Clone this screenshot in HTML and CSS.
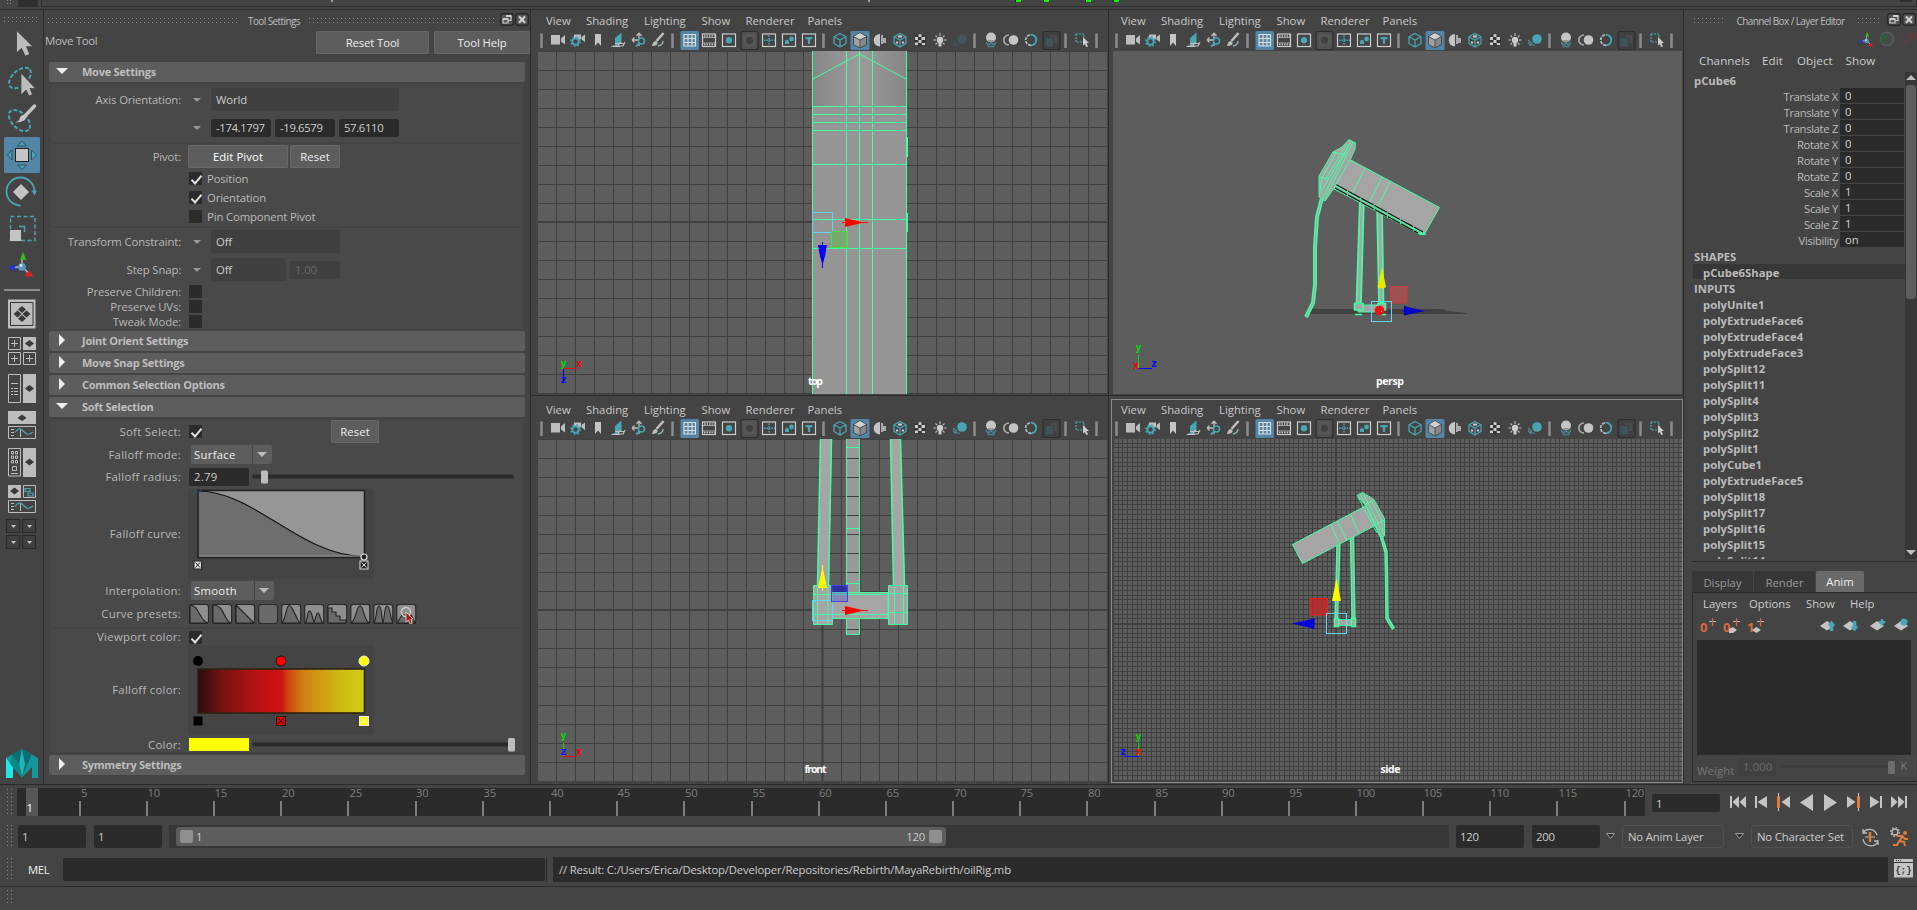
FILE: index.html
```html
<!DOCTYPE html>
<html lang="en">
<head>
<meta charset="utf-8">
<title>oilRig.mb</title>
<link rel="stylesheet" href="styles.css">
</head>
<body>
<svg class="defs" width="0" height="0" aria-hidden="true">
  <defs>
    <symbol id="cursor" viewBox="0 0 18 27"><path d="M1 0V22L6 17.500L10 26L14 24L10.500 16H17Z" fill="#bdbdbd"/></symbol>
    <pattern id="dots" width="4" height="4" patternUnits="userSpaceOnUse"><rect width="1" height="1" fill="#858585"/></pattern>
    <pattern id="g19a" x="556" y="51" width="19" height="19" patternUnits="userSpaceOnUse"><path d="M.5 0V19M0 .5H19" stroke="#404040"/></pattern>
    <pattern id="g19b" x="556" y="439" width="19" height="19" patternUnits="userSpaceOnUse"><path d="M.5 0V19M0 .5H19" stroke="#404040"/></pattern>
    <pattern id="g5" x="1336" y="623" width="19" height="19" patternUnits="userSpaceOnUse"><path d="M.5 0V19M5.500 0V19M10.500 0V19M14.500 0V19M0 .5H19M0 5.500H19M0 10.500H19M0 14.500H19" stroke="#404040"/></pattern>
    <linearGradient id="roof"><stop offset="0" stop-color="#868686"/><stop offset=".5" stop-color="#9c9c9c"/><stop offset="1" stop-color="#868686"/></linearGradient>
    <linearGradient id="falloff"><stop offset="0" stop-color="#2a0c0c"/><stop offset=".15" stop-color="#781212"/><stop offset=".35" stop-color="#b81212"/><stop offset=".5" stop-color="#d01212"/><stop offset=".54" stop-color="#d04412"/><stop offset=".64" stop-color="#d08412"/><stop offset=".85" stop-color="#d0b812"/><stop offset="1" stop-color="#d0d012"/></linearGradient>
    <symbol id="vptools" viewBox="538 30 569 21">
      <path d="M541.500 33.500V48M672.500 33.500V48M823.500 33.500V48M974.500 33.500V48M1065.500 33.500V48M1096.500 33.500V48" stroke="#8c8c8c" stroke-width="2.500"/>
      <path d="M551 35H560V44.500H551ZM561 38.500L565 35V44.500L561 41.500Z" fill="#bdbdbd"/>
      <path d="M574 34.500H581V39H574ZM581.500 37L585 34.500V42L581.500 39.500Z" fill="#bdbdbd"/>
      <circle cx="575.500" cy="41.500" r="3.200" fill="#444" stroke="#49a5b3" stroke-width="2"/><circle cx="575.500" cy="41.500" r="4.700" fill="none" stroke="#49a5b3" stroke-width="1.500" stroke-dasharray="1.700 2"/>
      <path d="M595 34H601V46L598 42.500L595 46Z" fill="#c4c4c4"/>
      <path d="M615 38L621.500 32.500V43L615 47Z" fill="#49a5b3"/><path d="M613 46H623L625 42M611.500 46.500H620M615 43.500H624.500M617 47L620.500 42" stroke="#c0c0c0" fill="none" stroke-width="1.200"/>
      <path d="M639 33V46M632 40H642M639 33L636.500 36M639 33L641.500 36M632 40L634.500 37.500M632 40L634.500 42.500" stroke="#bdbdbd" fill="none" stroke-width="1.300"/><circle cx="641.500" cy="41" r="3" fill="#444" stroke="#49a5b3" stroke-width="1.500"/><path d="M639.500 43L636 46.500" stroke="#49a5b3" stroke-width="2"/>
      <path d="M663.500 33L656.500 41" stroke="#bdbdbd" stroke-width="2.500"/><path d="M652 46Q653 41 656 41Q659 43 656.500 45Q655 46 652 46Z" fill="#bdbdbd"/><path d="M658 46Q663 45 663 41" stroke="#8faeb3" fill="none" stroke-width="1.500"/>
      <rect x="680.500" y="31" width="18.500" height="19" rx="1.500" fill="#5285a6"/><path d="M684 34.500H695.500V46H684ZM688 34V46M692 34V46M684 38.500H696M684 42.500H696" fill="none" stroke="#ddd" stroke-width="1.200"/>
      <rect x="702.500" y="34" width="13" height="12.500" fill="none" stroke="#ccc" stroke-width="1.200"/><path d="M704 36H715M704 44.500H715" stroke="#bbb" stroke-width="1.400" stroke-dasharray="1.500 1"/><path d="M703 37.500H715.500M703 43H715.500" stroke="#bbb" stroke-width=".8"/>
      <rect x="722.500" y="34" width="13" height="12.500" fill="none" stroke="#ccc" stroke-width="1.200"/><circle cx="729" cy="40.200" r="3.200" fill="#49a5b3"/>
      <rect x="741" y="31.500" width="17" height="18" rx="2" fill="#505050" stroke="#2e2e2e" stroke-width="1.200"/><rect x="743.500" y="34" width="12" height="12.500" fill="#565656"/><circle cx="749.500" cy="40.200" r="3.500" fill="#404040"/>
      <rect x="762.500" y="34" width="13" height="12.500" fill="none" stroke="#ccc" stroke-width="1.200"/><path d="M764 40.200H775M769 35.500V45.500" stroke="#49a5b3" stroke-width="1.500" stroke-dasharray="1.500 1"/>
      <rect x="782.500" y="34" width="13" height="12.500" fill="none" stroke="#ccc" stroke-width="1.200"/><path d="M785 44V41L787 39.500L789 41V44Z" fill="#49a5b3"/><circle cx="791.500" cy="39" r="2.400" fill="#49a5b3"/>
      <rect x="802.500" y="34" width="13" height="12.500" fill="none" stroke="#ccc" stroke-width="1.200"/><path d="M805.500 38.200H812.500M809 38V44" stroke="#49a5b3" stroke-width="2.300"/>
      <path d="M840 33.500L846 36.800V43.500L840 47L834 43.500V36.800ZM834 36.800L840 40L846 36.800M840 40V47" fill="none" stroke="#49a5b3" stroke-width="1.300"/>
      <rect x="850.500" y="31" width="19" height="19" rx="1.500" fill="#5285a6"/><path d="M860 32.500L866.500 36.500L860 40L853.500 36.500Z" fill="#d0d0d0"/><path d="M853.500 36.500L860 40V48L853.500 44.500Z" fill="#a0a0a0"/><path d="M866.500 36.500L860 40V48L866.500 44.500Z" fill="#888"/><path d="M860 32.500L866.500 36.500V44.500L860 48L853.500 44.500V36.500ZM853.500 36.500L860 40L866.500 36.500M860 40V48" fill="none" stroke="#333" stroke-width=".7"/>
      <path d="M880 34A6.200 6.200 0 0 0 880 46.500Z" fill="#c4c4c4"/><path d="M881 35H883V38H886V40.500H883V44H881ZM883 40H886V43H883Z" fill="#aaa"/>
      <path d="M900 33.500L906 36.800V43.500L900 47L894 43.500V36.800Z" fill="#444" stroke="#49a5b3" stroke-width="1.300"/><path d="M898 36.500H902M897 41.500V43.500M903 41.500V43.500" stroke="#ccc" stroke-width="2.200"/><path d="M894 36.800L900 40L906 36.800M900 40V47" stroke="#49a5b3" stroke-width="1.300" fill="none"/>
      <circle cx="920" cy="40" r="6" fill="#333"/><path d="M915 37H918V40H915ZM918.500 34.300H921.500V37H918.500ZM921.500 37H925V40H921.500ZM918.500 40H921.500V43H918.500ZM915 42.500H918V45H915ZM921.800 43H925V45H921.800Z" fill="#ccc"/>
      <circle cx="940" cy="40" r="3.200" fill="#ccc"/><path d="M940 33V36M933.500 40H936M944 40H946.500M935.500 35.500L937 37M944.500 35.500L943 37M935.500 44.500L937 43M944.500 44.500L943 43" stroke="#bbb" stroke-width="1.100"/><path d="M938.500 43H941.500V46.500H938.500Z" fill="#ccc"/>
      <circle cx="991" cy="37.500" r="5" fill="#c4c4c4"/><path d="M986 42L988 45L991 43L994 45L996 42M987.500 46.500H994.500" stroke="#49828c" stroke-width="1.600" fill="none"/><path d="M988 40H994V42H988Z" fill="#999"/>
      <circle cx="1013.500" cy="40" r="4.800" fill="#c4c4c4"/><path d="M1009 35A5 5 0 0 0 1009 45M1006.500 35.500A5 5 0 0 0 1006.500 44.500" fill="none" stroke="#aaa" stroke-width="1.300"/>
      <path d="M1031 34.700A5.300 5.300 0 0 1 1031 45.300" fill="none" stroke="#49a5b3" stroke-width="1.800"/><path d="M1031 45.300A5.300 5.300 0 0 1 1031 34.700" fill="none" stroke="#aebcbe" stroke-width="1.800" stroke-dasharray="3 1"/>
      <rect x="1043" y="31.500" width="17" height="18" rx="2" fill="#404040" stroke="#2e2e2e" stroke-width="1.200"/><path d="M1045.500 38H1053V46.500H1045.500Z" fill="#3f5358"/><path d="M1050 35L1057 35V43H1054V37H1050Z" fill="#4b4b4b"/>
      <rect x="1076" y="34" width="8" height="8" fill="none" stroke="#49a5b3" stroke-width="1.200" stroke-dasharray="2 1"/><path d="M1083 37L1089 43H1086.500L1088 46.500L1086 47L1085 44L1083 45.500Z" fill="#ccc"/>
    </symbol>
    <symbol id="motion" viewBox="950 30 20 21"><circle cx="962" cy="39" r="4.800" fill="#49a5b3"/><path d="M953 40L957 43.500M953 42.500L956 46M955 44L960 45.500" stroke="#4d8790" stroke-width="1.300"/></symbol>
    <symbol id="float" viewBox="0 0 14 13"><rect x=".75" y=".75" width="12.500" height="11.500" rx="2" fill="#555" stroke="#262626" stroke-width="1.300"/><path d="M6 3.500H11V7.500H8.500M3 6H8V10H3Z" fill="none" stroke="#ccc" stroke-width="1.200"/><path d="M6 3H11.500M3 6H8" stroke="#ccc" stroke-width="1.800"/></symbol>
    <symbol id="close" viewBox="0 0 14 13"><rect x=".75" y=".75" width="12.500" height="11.500" rx="2" fill="#555" stroke="#262626" stroke-width="1.300"/><path d="M4 3.500L10 9.700M10 3.500L4 9.700" stroke="#d4d4d4" stroke-width="2"/></symbol>
    <symbol id="gizmo" viewBox="0 0 28 28"><path d="M15 15V7M15 15L7 16M15 15L23 23" stroke="#bbb" stroke-width="1.500"/><circle cx="15" cy="15.500" r="4" fill="#5a96c0"/><circle cx="14" cy="14" r="1.500" fill="#cfe6f5"/><path d="M16 0L19.500 8H13Z" fill="#35bb20"/><path d="M0 16L8 12.500V20Z" fill="#2338c8"/><path d="M27 26L17.500 24.500L23 19Z" fill="#d82020"/></symbol>
  </defs>
</svg>

<div class="app">
  <header class="shelf">
    <svg width="1917" height="10"><g fill="none" stroke="#2b2b2b"><path d="M41.500 0V6.500H1916.500V0"/><path d="M0 9.500H1917"/></g><path d="M18 0H38V7H18ZM1900 0H1912V2H1900Z" fill="#2f2f2f"/><path d="M7 0H8V1H7ZM10 0H11V1H10ZM7 3H8V4H7ZM10 3H11V4H10Z" fill="#888"/><path d="M331 0H333V2H331ZM868 0H870V2H868Z" fill="#999"/><path d="M1015 0H1022V2H1015ZM1043 0H1050V2H1043ZM1085 0H1092V2H1085ZM1113 0H1120V2H1113Z" fill="#111"/><path d="M1016 0H1021V2H1016ZM1044 0H1049V2H1044ZM1086 0H1091V2H1086ZM1114 0H1119V2H1114Z" fill="#0f0"/></svg>
  </header>

  <main class="work">
    <nav class="toolbox">
      <svg width="43" height="774" viewBox="0 10 43 774">
        <g transform="translate(4 17)"><rect width="34" height="5" fill="url(#dots)"/></g>
        <use href="#cursor" x="16" y="31" width="17" height="26"/>
        <ellipse cx="20" cy="78" rx="13" ry="7.500" transform="rotate(-42 20 78)" fill="none" stroke="#49a5b3" stroke-width="2" stroke-dasharray="4 2"/>
        <path d="M21 73V95L26 90L29 96L32.500 94.500L30 88.500H35.500Z" fill="#bdbdbd" stroke="#444" stroke-width=".8"/>
        <ellipse cx="19.500" cy="120.500" rx="13" ry="7.500" transform="rotate(45 19.500 120.500)" fill="none" stroke="#49a5b3" stroke-width="2" stroke-dasharray="4 2"/>
        <path d="M34.500 106L25 116" stroke="#c4c4c4" stroke-width="3.500" stroke-linecap="round"/><path d="M15 122.500Q20 121 20 117Q24 113 26 116Q27 122 15 122.500Z" fill="#c4c4c4"/>
        <rect x="4" y="137" width="36" height="36" rx="1.500" fill="#5285a6"/><rect x="15.500" y="148.500" width="13" height="13" fill="#c4c4c4" stroke="#222"/>
        <path d="M22 141L26.500 146H17.500ZM22 169.500L26.500 165H17.500ZM7.500 155L12 150V160ZM36.500 155L31.500 150V160Z" fill="#49a5b3" stroke="#24424f" stroke-width=".8"/>
        <path d="M20.500 205.500A14 14 0 1 1 34.500 191" fill="none" stroke="#49a5b3" stroke-width="1.800"/><path d="M31.500 190.500H37L34.500 195.500Z" fill="#49a5b3"/><path d="M21 184L29 192L21 200L13 192Z" fill="#c4c4c4"/>
        <rect x="10.500" y="216.500" width="24.500" height="24" fill="none" stroke="#49a5b3" stroke-width="1.400" stroke-dasharray="4 2.500"/><rect x="10" y="230" width="11" height="11" fill="#c4c4c4"/><path d="M19 226.500H24.500V232" fill="none" stroke="#49a5b3" stroke-width="1.500"/>
        <use href="#gizmo" x="7" y="252" width="28" height="27"/>
        <rect x="4" y="289" width="36" height="2" fill="#8a8a8a"/>
        <g fill="#bdbdbd"><path d="M8 299.500H35.500V328.500H8ZM23 337H36V350H23ZM23 374H36V403H23ZM8 411H36V424H8ZM23 448H36V477H23ZM8 485H21V498H8Z"/></g>
        <path d="M10.500 302.500H33V325.500H10.500Z" fill="none" stroke="#333"/>
        <g fill="#3a3a3a"><path d="M22 306L26 309.500L22 313L18 309.500ZM22 315L26 318.500L22 322L18 318.500ZM17.500 310.500L21.500 314L17.500 317.500L13.500 314ZM26.500 310.500L30.500 314L26.500 317.500L22.500 314Z"/><path d="M29.500 340L34 343.500L29.500 347L25 343.500ZM29.500 385L34 388.500L29.500 392L25 388.500ZM22 414.500L26.500 418L22 421L17.500 418ZM29.500 458.500L34 462L29.500 465.500L25 462ZM14.500 487.500L19 491L14.500 494.500L10 491Z"/></g>
        <g fill="none" stroke="#bdbdbd"><path d="M8.500 337.500H20.500V349.500H8.500ZM8.500 352.500H20.500V364.500H8.500ZM23.500 352.500H35.500V364.500H23.500ZM8.500 374.500H20.500V402.500H8.500ZM8.500 426.500H35.500V438.500H8.500ZM8.500 448.500H20.500V476H8.500ZM23.500 485.500H35.500V497.500H23.500ZM8.500 500.500H35.500V512.500H8.500Z"/><path d="M14.500 340V347M11 343.500H18M14.500 355V362M11 358.500H18M29.500 355V362M26 358.500H33M11 383.500H18M11 388.500H13M14 388.500H18M11 391.500H13M14 391.500H18M11 394.500H13M14 394.500H18M11 429.500H14M11 432.500H14M11 435.500H14M11 503.500H14M11 506.500H14M11 509.500H14M20.500 429V437M20.500 503V511M11.500 451.500H13.500V454H11.500ZM15.500 451.500H17.500V454H15.500ZM11.500 456H13.500V458.500H11.500ZM15.500 456H17.500V458.500H15.500ZM11.500 460.500H13.500V463H11.500ZM15.500 460.500H17.500V463H15.500ZM12.500 466.500H16.500V470.500H12.500ZM11 473.500H18"/></g>
        <path d="M15 432.500Q19 427 22 430T27 434T33 432M15 506.500Q19 501 22 504T27 508T33 506M25 488.500H30V491.500H25ZM28 493H33V496H28Z" fill="none" stroke="#49a5b3" stroke-width="1.200"/>
        <g fill="#404040" stroke="#292929" stroke-width="1.200"><path d="M6.500 519.500H19.500V532.500H6.500ZM22.500 519.500H35.500V532.500H22.500ZM6.500 535.500H19.500V548.500H6.500ZM22.500 535.500H35.500V548.500H22.500Z"/></g>
        <path d="M11 525H16L13.500 528ZM27 525H32L29.500 528ZM11 541H16L13.500 544ZM27 541H32L29.500 544Z" fill="#c4c4c4"/>
        <path d="M6 758V778H13V767L22 777.500L32 767V778H38V758L22 749Z" fill="#13989b"/><path d="M6 758L13 767V778H6Z" fill="#25e6e6"/><path d="M22 749L12 754L22 777L32 754Z" fill="#0c6d72"/><path d="M22 749L19 764L22 777L25 764Z" fill="#1cb6b8"/><path d="M12 754L19 764L22 777L10 764Z" fill="#0f8589"/>
      </svg>
    </nav>

    <section class="settings">
      <div class="titlebar">
        <svg class="grip" width="191" height="5"><rect width="191" height="5" fill="url(#dots)"/></svg>
        <span class="title">Tool Settings</span>
        <svg class="grip" width="187" height="5"><rect width="187" height="5" fill="url(#dots)"/></svg>
        <svg width="14" height="13"><use href="#float"/></svg><svg width="14" height="13"><use href="#close"/></svg>
      </div>
      <div class="toolhead"><span class="name">Move Tool</span><button class="btn reset-tool">Reset Tool</button><button class="btn tool-help">Tool Help</button></div>

      <h2 class="frame open">Move Settings</h2>
      <div class="body move">
        <div class="row h23"><label>Axis Orientation:</label><i class="arr"></i><span class="fld dim w188">World</span></div>
        <div class="row h18 mt8"><label></label><i class="arr"></i><span class="fld num w60">-174.1797</span><span class="fld num w60">-19.6579</span><span class="fld num w60">57.6110</span></div>
        <hr class="sep mt5">
        <div class="row h23 mt1"><label>Pivot:</label><button class="btn edit">Edit Pivot</button><button class="btn rst">Reset</button></div>
        <div class="row h19 mt1"><label></label><i class="cb on"></i><span class="cbl">Position</span></div>
        <div class="row h19"><label></label><i class="cb on"></i><span class="cbl">Orientation</span></div>
        <div class="row h19"><label></label><i class="cb"></i><span class="cbl">Pin Component Pivot</span></div>
        <hr class="sep">
        <div class="row h23 mt2"><label>Transform Constraint:</label><i class="arr"></i><span class="fld dim w129">Off</span></div>
        <div class="row h23 mt5"><label>Step Snap:</label><i class="arr"></i><span class="fld dim w75">Off</span><span class="fld dim off w50">1.00</span></div>
        <div class="row h15 mt3"><label>Preserve Children:</label><i class="cb"></i></div>
        <div class="row h15"><label>Preserve UVs:</label><i class="cb"></i></div>
        <div class="row h15"><label>Tweak Mode:</label><i class="cb"></i></div>
      </div>
      <h2 class="frame">Joint Orient Settings</h2>
      <h2 class="frame">Move Snap Settings</h2>
      <h2 class="frame">Common Selection Options</h2>
      <h2 class="frame open">Soft Selection</h2>
      <div class="body soft">
        <div class="row h23"><label>Soft Select:</label><i class="cb on"></i><button class="btn softreset">Reset</button></div>
        <div class="row h19 mt2"><label>Falloff mode:</label><span class="combo w81"><b>Surface</b><i class="arr"></i></span></div>
        <div class="row h18 mt4"><label>Falloff radius:</label><span class="fld w60">2.79</span><svg class="slider" width="268" height="16"><rect x="0" y="5.500" width="262" height="4" rx="2" fill="#2b2b2b"/><rect x="9" y="1.500" width="7" height="13" rx="1.500" fill="#bdbdbd"/></svg></div>
        <div class="row h90 mt3"><label>Falloff curve:</label>
          <svg class="well" width="186" height="90" viewBox="188 489 186 90"><path d="M198 491H364V557H198Z" fill="#969696"/><path d="M198 491C255 491 300 556 364 556.500H198Z" fill="#6e6e6e"/><path d="M198 491C255 491 300 556 364 556.500" fill="none" stroke="#111" stroke-width="1.100"/><path d="M198 556H364" stroke="#999"/><path d="M198 490.500H364.500V557.500H198Z" fill="none" stroke="#222" stroke-width="1.600"/><path d="M194.500 490A3.500 3.500 0 0 0 201 490" fill="none" stroke="#2b4a66" stroke-width="1.200"/><circle cx="364" cy="557" r="3" fill="#222" stroke="#ddd" stroke-width="1.200"/><rect x="194" y="561" width="7.500" height="8" fill="#ddd" stroke="#222"/><path d="M195.500 562.500L200 567.500M200 562.500L195.500 567.500" stroke="#222"/><rect x="360" y="561" width="8" height="8" fill="#222" stroke="#ddd"/><path d="M361.500 562.500L366.500 567.500M366.500 562.500L361.500 567.500" stroke="#ddd"/></svg></div>
        <div class="row h19 mt2"><label>Interpolation:</label><span class="combo w83"><b>Smooth</b><i class="arr"></i></span></div>
        <div class="row h20 mt4"><label>Curve presets:</label>
          <svg width="230" height="20" viewBox="188 604 230 20"><g fill="#8f8f8f" stroke="#2a2a2a" stroke-width="1.200"><rect x="189.500" y="604.500" width="19" height="19" rx="2.500"/><rect x="212.600" y="604.500" width="19" height="19" rx="2.500"/><rect x="235.600" y="604.500" width="19" height="19" rx="2.500"/><rect x="258.600" y="604.500" width="19" height="19" rx="2.500" fill="#6a6a6a"/><rect x="281.700" y="604.500" width="19" height="19" rx="2.500"/><rect x="304.700" y="604.500" width="19" height="19" rx="2.500"/><rect x="327.700" y="604.500" width="19" height="19" rx="2.500"/><rect x="350.800" y="604.500" width="19" height="19" rx="2.500"/><rect x="373.800" y="604.500" width="19" height="19" rx="2.500"/><rect x="396.800" y="604.500" width="19" height="19" rx="2.500"/></g>
          <g fill="#6a6a6a" stroke="#222" stroke-width="1.100"><path d="M190 605C199 605 200 622 208 623H190Z"/><path d="M213 605C225 605 224 622 231 623H213Z"/><path d="M236 605L254 623H236Z"/><path d="M282 623C286 619 286 605.500 289 605.500C293 605.500 296 619 300 623Z"/><path d="M305 623C308 620 307 611 309.500 611S312 618 314 622C316 618 316 613 318 613S320 620 323 623Z"/><path d="M328 608H332V612H336V616H340V620H346V623H328Z"/><path d="M351 623C357 619 356 606 360 606S363 619 369 623Z"/><path d="M374 623C377 618 376 606 379 606S381 618 383 622C385 618 384 606 387 606S390 618 393 623Z"/><path d="M397 623L402 615H411L415 623Z"/></g><circle cx="406" cy="612" r="4.500" fill="none" stroke="#ccc" stroke-width="1.500"/><path d="M406 612V622L408.500 620L410 624H412L411 619H413Z" fill="#b01818" stroke="#eee" stroke-width=".7"/></svg></div>
        <hr class="sep mt3">
        <div class="row h14 mt1"><label>Viewport color:</label><i class="cb on"></i></div>
        <div class="row h90 mt1"><label>Falloff color:</label>
          <svg class="well" width="186" height="90" viewBox="188 645 186 90"><rect x="198" y="669" width="166.500" height="44" fill="url(#falloff)" stroke="#2b2410" stroke-width="1.600"/><circle cx="198" cy="661" r="5"/><circle cx="281" cy="661" r="5" fill="red" stroke="#111"/><circle cx="364" cy="661" r="5" fill="#ff0" stroke="#eee"/><rect x="193.500" y="716.500" width="9" height="9"/><rect x="276.500" y="716.500" width="9" height="9" fill="#e00000" stroke="#111"/><path d="M278.500 718.500L283.500 723.500M283.500 718.500L278.500 723.500" stroke="#111"/><rect x="359.500" y="716.500" width="9" height="9" fill="#ff0" stroke="#eee"/><path d="M361.500 718.500L366.500 723.500M366.500 718.500L361.500 723.500" stroke="#eee"/></svg></div>
        <div class="row h13 mt3"><label>Color:</label><span class="swatch"></span><svg class="slider" width="268" height="14"><rect x="0" y="4.500" width="258" height="4" rx="2" fill="#2b2b2b"/><rect x="256" y="0" width="7" height="13.500" rx="1.500" fill="#bdbdbd"/></svg></div>
      </div>
      <h2 class="frame">Symmetry Settings</h2>
    </section>

    <section class="views">
      <div class="col">
        <div class="vp top">
          <div class="vmenu"><span>View</span><span>Shading</span><span>Lighting</span><span>Show</span><span>Renderer</span><span>Panels</span></div>
          <svg class="vtools" width="569" height="21"><use href="#vptools"/><use href="#motion" x="412" width="20" height="21" opacity=".2"/></svg>
          <svg class="canvas" width="569" height="343" viewBox="538 51 569 343"><rect x="538" y="51" width="569" height="343" fill="#5d5d5d"/><rect x="538" y="51" width="569" height="343" fill="url(#g19a)"/><path d="M538 222H1107" stroke="#404040" stroke-width="2"/>
            <path d="M812 51H906V394H812Z" fill="#959595"/><path d="M812 51H906V106H812Z" fill="url(#roof)"/>
            <path d="M812.500 51V394M846.500 51V394M859.500 51V394M872.500 51V394M906.500 51V394M812 106.500H907M812 114.500H907M812 122.500H907M812 130.500H907M812 164.500H907M812 219.500H907M812 248.500H907M812 79.500L859.500 54L907 79.500M907.500 137V157M907.500 213V232" fill="none" stroke="#43ffa3"/>
            <path d="M812.500 212.500H832.500V232.500H812.500ZM822 222.500H823" fill="none" stroke="#62d5f5"/><path d="M842 222.500H868" stroke="red"/><path d="M845 218V227L864 222.500Z" fill="red"/><rect x="831.500" y="231.500" width="16" height="16" fill="#6cb260" fill-opacity=".7" stroke="#3fe03f"/><path d="M822.500 242V268" stroke="#00f"/><path d="M818 245H827L825 256L822.500 265L820 256Z" fill="#0000f0"/>
            <path d="M563.500 368V382" stroke="#00f"/><path d="M563 368.500H577" stroke="red"/><g class="axis"><text x="560.500" y="367" fill="#0d0">y</text><text x="576" y="367" fill="red">x</text><text x="560.500" y="383" fill="#00f">z</text></g><text class="cam" x="815.500" y="385" textLength="15">top</text></svg>
        </div>
        <div class="vp bottom">
          <div class="vmenu"><span>View</span><span>Shading</span><span>Lighting</span><span>Show</span><span>Renderer</span><span>Panels</span></div>
          <svg class="vtools" width="569" height="21"><use href="#vptools"/><use href="#motion" x="412" width="20" height="21"/></svg>
          <svg class="canvas" width="569" height="342" viewBox="538 439 569 342"><rect x="538" y="439" width="569" height="342" fill="#5d5d5d"/><rect x="538" y="439" width="569" height="342" fill="url(#g19b)"/><path d="M538 610H1107M822.500 439V781" stroke="#404040" stroke-width="2"/>
            <path d="M846.500 439H859.500V634.500H846.500Z" fill="#999"/><path d="M847 458.500H859M847 477.500H859M847 496.500H859M847 515.500H859M847 534.500H859M847 553.500H859M847 572.500H859M847 629.500H859" stroke="#404040"/><path d="M846.500 439V634.500H859.500V439M846.500 447.500H859.500M846.500 528.500H859.500M846.500 583.500H859.500" fill="none" stroke="#43ffa3"/>
            <path d="M820.500 439H832L829 585H817.500ZM890.500 439H900.500L905 585H893.500Z" fill="#a5a5a5"/><path d="M820.500 439L817.500 585M831.500 439L828.500 585M890.500 439L893.500 585M900.500 439L904.500 585" stroke="#43ffa3" stroke-width="1.500"/>
            <path d="M832 592.500H888V618.500H832Z" fill="#a5a5a5" stroke="#43ffa3"/><path d="M832 594.500H888M832 614.500H888" stroke="#43ffa3"/>
            <path d="M813.500 585.500H832.500V624.500H813.500ZM888.500 585.500H907.500V624.500H888.500Z" fill="#a5a5a5" stroke="#43ffa3"/><path d="M817.500 585V624M828 585V624M813 594.500H832M813 614.500H832M894.500 585V624M903.500 585V624M888 593.500H908M888 612.500H908" stroke="#43ffa3"/>
            <rect x="812.500" y="600.500" width="20" height="20" fill="none" stroke="#62d5f5"/><rect x="831.500" y="585.500" width="16" height="16" fill="#5050d0" fill-opacity=".35" stroke="#4343e0"/><path d="M832 586H847V592H832Z" fill="#2525a8" opacity=".8"/><path d="M842 610.500H868" stroke="red"/><path d="M845 606V615L864 610.500Z" fill="red"/><path d="M822.500 565V591" stroke="#ff0"/><path d="M822.500 567L827 588H818Z" fill="#ff0"/>
            <path d="M563.500 743V757" stroke="#0d0"/><path d="M563 756.500H577" stroke="red"/><g class="axis"><text x="560.500" y="739" fill="#0d0">y</text><text x="576" y="755" fill="red">x</text><text x="560.500" y="755" fill="#00f">z</text></g><text class="cam" x="815.500" y="773" textLength="22">front</text></svg>
        </div>
      </div>
      <div class="col right">
        <div class="vp top">
          <div class="vmenu"><span>View</span><span>Shading</span><span>Lighting</span><span>Show</span><span>Renderer</span><span>Panels</span></div>
          <svg class="vtools" width="569" height="21"><use href="#vptools"/><use href="#motion" x="412" width="20" height="21"/></svg>
          <svg class="canvas" width="569" height="343" viewBox="1113 51 569 343"><rect x="1113" y="51" width="569" height="343" fill="#5d5d5d"/>
            <path d="M1311 309H1443L1447 311L1466 313V314H1309Z" fill="#414141"/>
            <g fill="#a5a5a5" stroke="#43ffa3"><path d="M1322 198L1317 217L1315 247L1315 285L1313 303L1306 317" fill="none" stroke-width="4"/><path d="M1322 198L1317 217L1315 247L1315 285L1313 303L1306 317" fill="none" stroke="#a5a5a5" stroke-width="1.200"/>
            <path d="M1360 197H1364L1361 303H1356.500ZM1377 206H1382L1383.500 303H1379Z" stroke-width="1.700"/><path d="M1358 305H1383V312H1358Z"/><path d="M1354.500 303.500H1363V310H1354.500ZM1378 303.500H1385.500V310H1378Z" stroke-width="1.500"/><path d="M1355 314.500H1362M1379 314.500H1386" stroke-width="1.500"/>
            <path d="M1347 158L1439.500 207.500L1424.500 234L1333 184Z"/><path d="M1333 184L1424.500 234L1421 234.500L1333 188Z" stroke-width="1.500"/><path d="M1335 184L1423 232M1335 188L1418 233" stroke="#101010" stroke-width="1.200" stroke-dasharray="14 1"/><path d="M1365 168L1352.500 193M1382 177L1369.500 202M1390 182L1378 206" fill="none"/>
            <path d="M1349 139.500L1355.500 143L1355 149L1351 158L1334 188L1325 201L1319 197V176L1333 152L1342 147Z"/><path d="M1351 141L1322 199M1353 142L1325 199M1349 145L1320 193M1333 152L1342 154L1346 157M1336 153L1322 178L1320 190M1319 177L1329 179M1347 144L1325 180" fill="none"/></g>
            <rect x="1390.500" y="286.500" width="16.500" height="16.500" fill="#c34a4a" fill-opacity=".65" stroke="#cc3c3c"/><path d="M1382 267L1386 287Q1382 290 1377.500 287Z" fill="#e8e800"/><path d="M1404 306V315.500L1425 311Z" fill="#0000c8"/><path d="M1402 311H1404" stroke="#00f"/><circle cx="1379.500" cy="310.500" r="4.800" fill="#f01010"/><rect x="1371.500" y="301.500" width="20" height="20" fill="none" stroke="#62d5f5"/><path d="M1381 311.500H1382" stroke="#8df"/>
            <path d="M1138.500 355V368" stroke="#0d0"/><path d="M1138 368.500H1152" stroke="#00f"/><g class="axis"><text x="1135.500" y="351" fill="#0d0">y</text><text x="1133" y="369" fill="red">x</text><text x="1151" y="367" fill="#00f">z</text></g><text class="cam" x="1390" y="385" textLength="28">persp</text></svg>
        </div>
        <div class="vp bottom active">
          <div class="vmenu"><span>View</span><span>Shading</span><span>Lighting</span><span>Show</span><span>Renderer</span><span>Panels</span></div>
          <svg class="vtools" width="569" height="21"><use href="#vptools"/><use href="#motion" x="412" width="20" height="21"/></svg>
          <svg class="canvas" width="569" height="342" viewBox="1113 439 569 342"><rect x="1113" y="439" width="569" height="342" fill="#5d5d5d"/><rect x="1113" y="439" width="569" height="342" fill="url(#g5)"/><path d="M1113 624H1682M1336 439V781" stroke="#404040" stroke-width="2"/>
            <g fill="#a5a5a5" stroke="#43ffa3"><path d="M1381.500 537L1386 552L1386.500 575L1387 618L1393.500 629" fill="none" stroke-width="3.500"/><path d="M1381.500 537L1386 552L1386.500 575L1387 618L1393.500 629" fill="none" stroke="#a5a5a5" stroke-width=".8"/>
            <path d="M1337 543H1340L1337.500 620H1335ZM1350.500 537H1353.500L1355 620H1352Z" stroke-width="1.400"/><path d="M1337 619.500H1353V625.500H1337Z"/><path d="M1334.500 618.500H1338.500V626.500H1334.500ZM1351.500 618.500H1355.500V626.500H1351.500Z" stroke-width="1.600"/>
            <path d="M1292.500 544.500L1366.500 505.500L1375 525.500L1302.500 563.500Z"/><path d="M1331 524.500L1339.500 544M1337.500 521.500L1346.500 540M1350.500 514.500L1359 533" fill="none"/>
            <path d="M1357 495.500L1362.500 492.500L1374 499.500L1384.500 518.500V536L1380 537L1367 507Z"/><path d="M1360 494L1382 537M1363 493L1384 535M1365 505L1374 500M1371 500L1381 519L1383 531M1375 525L1384 520M1358 497L1377 533" fill="none"/></g>
            <rect x="1310.500" y="598.500" width="17" height="16.500" fill="#e01818" fill-opacity=".65" stroke="#f02020"/><path d="M1316 599V615M1322 599V615M1311 604.500H1327M1311 609.500H1327" stroke="#a33"/><path d="M1336.500 578L1341 601H1332Z" fill="#f8f800"/><path d="M1314.500 618.500V629L1292 623.500Z" fill="#0000d8"/><rect x="1326.500" y="613.500" width="20" height="20" fill="none" stroke="#62d5f5"/>
            <path d="M1138.500 743V757" stroke="#0d0"/><path d="M1124 756.500H1139" stroke="#00f"/><g class="axis"><text x="1135.500" y="740" fill="#0d0">y</text><text x="1135.500" y="755" fill="red">x</text><text x="1120" y="755" fill="#00f">z</text></g><text class="cam" x="1390.500" y="773" textLength="20">side</text></svg>
        </div>
      </div>
    </section>

    <aside class="channel">
      <div class="titlebar">
        <svg class="grip" width="29" height="5"><rect width="29" height="5" fill="url(#dots)"/></svg>
        <span class="title">Channel Box / Layer Editor</span>
        <svg class="grip" width="23" height="5"><rect width="23" height="5" fill="url(#dots)"/></svg>
        <svg width="14" height="13"><use href="#float"/></svg><svg width="14" height="13"><use href="#close"/></svg>
      </div>
      <div class="chicons"><svg width="59" height="18" viewBox="0 0 59 18"><use href="#gizmo" x="0" y="1" width="16" height="16"/><circle cx="29" cy="8" r="6.500" fill="#454b45" stroke="#5c5c5c" stroke-width="1.500"/><path d="M29 8V2.500A5.500 5.500 0 0 0 26 13Z" fill="#31593a"/><path d="M45 14L55 3M50 3H56V8" stroke="#6b3b3b" fill="none" stroke-width="1.500"/></svg></div>
      <div class="chmenu"><span>Channels</span><span>Edit</span><span>Object</span><span>Show</span></div>
      <div class="chbody">
        <div class="chlist">
          <b class="obj">pCube6</b>
          <div class="attr"><span>Translate X</span><em>0</em></div>
          <div class="attr"><span>Translate Y</span><em>0</em></div>
          <div class="attr"><span>Translate Z</span><em>0</em></div>
          <div class="attr"><span>Rotate X</span><em>0</em></div>
          <div class="attr"><span>Rotate Y</span><em>0</em></div>
          <div class="attr"><span>Rotate Z</span><em>0</em></div>
          <div class="attr"><span>Scale X</span><em>1</em></div>
          <div class="attr"><span>Scale Y</span><em>1</em></div>
          <div class="attr"><span>Scale Z</span><em>1</em></div>
          <div class="attr"><span>Visibility</span><em>on</em></div>
          <b class="sec">SHAPES</b>
          <b class="node sel">pCube6Shape</b>
          <b class="sec">INPUTS</b>
          <b class="node">polyUnite1</b><b class="node">polyExtrudeFace6</b><b class="node">polyExtrudeFace4</b><b class="node">polyExtrudeFace3</b><b class="node">polySplit12</b><b class="node">polySplit11</b><b class="node">polySplit4</b><b class="node">polySplit3</b><b class="node">polySplit2</b><b class="node">polySplit1</b><b class="node">polyCube1</b><b class="node">polyExtrudeFace5</b><b class="node">polySplit18</b><b class="node">polySplit17</b><b class="node">polySplit16</b><b class="node">polySplit15</b><b class="node">polySplit14</b>
        </div>
        <div class="scroll"><svg width="12" height="487"><path d="M1 8H11L6 3ZM1 478H11L6 483Z" fill="#bdbdbd"/><rect x="1" y="13" width="10" height="214" rx="3" fill="#5d5d5d"/></svg></div>
      </div>
      <div class="tabs"><span class="tab w61">Display</span><span class="tab w61">Render</span><span class="tab cur">Anim</span></div>
      <div class="layers">
        <div class="lmenu"><span>Layers</span><span>Options</span><span>Show</span><span>Help</span></div>
        <svg class="licons" width="224" height="24" viewBox="1693 615 224 24"><g class="keys"><text x="1700" y="632">0</text><text x="1723" y="632">0</text><text x="1747" y="632">1</text></g><path d="M1709 621.500H1716M1733 621.500H1740M1757 621.500H1764" stroke="#bbb"/><path d="M1712.500 618V626M1736.500 618V626M1760.500 618V626" stroke="#d9683c" stroke-width="1.300"/><path d="M1729 629L1733 627L1737 630L1733 633H1729ZM1752 630L1756.500 627L1761 630L1756.500 633ZM1820 626L1827 621L1834 626L1827 630.500ZM1843 626L1850 621L1857 626L1850 630.500ZM1870 626L1877 621L1884 626L1877 630.500ZM1894 626L1901 621L1908 626L1901 630.500Z" fill="#c4c4c4"/><path d="M1831.500 631V623M1854.500 621V629" stroke="#49a5b3" stroke-width="3.500"/><path d="M1827.500 625.500L1831.500 620.500L1835.500 625.500ZM1850.500 626.500L1854.500 631.500L1858.500 626.500Z" fill="#49a5b3"/><path d="M1882 619V625.500M1878.800 622.200H1885.200" stroke="#49a5b3" stroke-width="2.500"/><circle cx="1904" cy="622" r="3.500" fill="#49a5b3"/></svg>
        <div class="llist"></div>
        <div class="weight"><span class="wl">Weight</span><span class="wf">1.000</span><svg width="120" height="18"><rect x="4" y="7" width="112" height="3" rx="1.500" fill="#3e3e3e"/><rect x="112" y="3" width="7" height="13" rx="1.500" fill="#6c6c6c"/></svg><span class="key">K</span></div>
      </div>
    </aside>
  </main>

  <section class="timeline">
    <svg width="1648" height="46" viewBox="0 785 1648 46"><g transform="translate(7 789)"><rect width="5" height="25" fill="url(#dots)"/></g><rect x="17" y="788" width="1628" height="28" fill="#2b2b2b"/><rect x="26" y="788" width="12" height="28" fill="#575757"/>
      <path d="M80 801V816M147 801V816M214 801V816M281 801V816M348 801V816M416 801V816M483 801V816M550 801V816M617 801V816M684 801V816M752 801V816M819 801V816M886 801V816M953 801V816M1020 801V816M1087 801V816M1155 801V816M1222 801V816M1289 801V816M1356 801V816M1423 801V816M1490 801V816M1557 801V816M1625 801V816" stroke="#7e7e7e" stroke-width="2"/>
      <text class="now" x="26.500" y="812">1</text>
      <g class="ticks"><text x="81" y="797">5</text><text x="147.500" y="797">10</text><text x="214.500" y="797">15</text><text x="282" y="797">20</text><text x="349.500" y="797">25</text><text x="416" y="797">30</text><text x="483.500" y="797">35</text><text x="551" y="797">40</text><text x="617.500" y="797">45</text><text x="685" y="797">50</text><text x="752.500" y="797">55</text><text x="819" y="797">60</text><text x="886.500" y="797">65</text><text x="954" y="797">70</text><text x="1020.500" y="797">75</text><text x="1088" y="797">80</text><text x="1155.500" y="797">85</text><text x="1222" y="797">90</text><text x="1289.500" y="797">95</text><text x="1356.500" y="797">100</text><text x="1423.500" y="797">105</text><text x="1490.500" y="797">110</text><text x="1558.500" y="797">115</text><text x="1625.500" y="797">120</text></g></svg>
    <span class="inp cur-frame">1</span>
    <svg class="play" width="190" height="24" viewBox="1727 790 190 24"><g fill="#c4c4c4"><path d="M1730 796H1732V808H1730ZM1739 796V808L1732.500 802ZM1746 796V808L1739.500 802ZM1755 796H1757V808H1755ZM1767 796V808L1757.500 802ZM1790 796V808L1781.500 802ZM1813 794V811L1800 802.500ZM1824 794V811L1837 802.500ZM1847 796V808L1855.500 802ZM1870 796V808L1879.500 802ZM1880 796H1882V808H1880ZM1891 796V808L1897.500 802ZM1898 796V808L1904.500 802ZM1905 796H1907V808H1905Z"/></g><path d="M1778.500 793V811M1858.500 793V811" stroke="#ccc"/><path d="M1778.500 796V808M1858.500 796V808" stroke="#e07b3c" stroke-width="3"/></svg>
  </section>
  <section class="range">
    <svg class="vgrip" width="5" height="23"><rect width="5" height="23" fill="url(#dots)"/></svg>
    <span class="inp r1">1</span><span class="inp r2">1</span>
    <div class="track"><div class="bar"><i></i><span>1</span><span class="end">120</span><i></i></div></div>
    <span class="inp r3">120</span><span class="inp r4">200</span>
    <svg width="22" height="22"><path d="M6.500 8.500H14.500L10.500 13.500Z" fill="#333" stroke="#999"/></svg><span class="sel2">No Anim Layer</span>
    <svg width="27" height="22"><path d="M11.500 8.500H19.500L15.500 13.500Z" fill="#333" stroke="#999"/></svg><span class="sel2">No Character Set</span>
    <svg width="64" height="24" viewBox="1853 824 64 24"><path d="M1863 831.500A8 8 0 0 1 1877 834M1878 840.500A8 8 0 0 1 1863 838M1863 828V832H1867M1878 844V840H1874" fill="none" stroke="#bdbdbd" stroke-width="1.300"/><path d="M1865 836H1875" stroke="#bdbdbd"/><path d="M1870 831V841" stroke="#e07b3c" stroke-width="2.500"/><circle cx="1895" cy="831" r="3" fill="none" stroke="#bdbdbd" stroke-width="1.300"/><circle cx="1895" cy="831" r="4.400" fill="none" stroke="#bdbdbd" stroke-width="1.300" stroke-dasharray="1.500 1.950"/><circle cx="1905" cy="832" r="2" fill="#e07b3c"/><path d="M1897 835H1902L1900 840L1904 841L1905 845M1900 839L1897 844H1893M1902 835L1905 838H1908" fill="none" stroke="#e07b3c" stroke-width="2"/></svg>
  </section>
  <section class="cmd">
    <svg class="vgrip" width="5" height="23"><rect width="5" height="23" fill="url(#dots)"/></svg>
    <span class="mel">MEL</span><span class="inp cmdin"></span><i class="div"></i><span class="result">// Result: C:/Users/Erica/Desktop/Developer/Repositories/Rebirth/MayaRebirth/oilRig.mb</span>
    <svg width="19" height="20"><path d="M0 1H19V19.500H0Z" fill="#c4c4c4"/><path d="M0 4.500H19" stroke="#333"/><path d="M2 2.500H7" stroke="#333" stroke-dasharray="1 1"/><text x="9.500" y="15" class="brace" text-anchor="middle">{;}</text></svg>
  </section>
  <footer class="help"><svg class="vgrip" width="5" height="14"><rect width="5" height="14" fill="url(#dots)"/></svg></footer>
</div>
</body>
</html>
```
FILE: styles.css
```css
* { box-sizing: border-box; }
html { overflow: hidden; }
body { margin: 0; height: 910px; background: #444; color: #bbb; font: 11.3px/1 "Open Sans", "Noto Sans", sans-serif; overflow: hidden; }
svg { display: block; flex: none; }
.defs { width: 0; height: 0; overflow: hidden; float: left; }
.app { width: 1917px; height: 910px; display: flex; flex-direction: column; overflow: hidden; white-space: nowrap; }
.shelf { height: 10px; flex: none; }
.work { height: 775px; display: flex; flex: none; border-bottom: 1px solid #2b2b2b; }
.toolbox { width: 44px; border-right: 1px solid #2b2b2b; }

.titlebar { height: 21px; display: flex; align-items: center; }
.title { text-align: center; font-size: 10px; letter-spacing: -.6px; color: #bdbdbd; padding-top: 1px; }
.titlebar > svg:not(.grip) { margin-right: 1px; margin-top: -3px; }
.btn { border: 1px solid #666; background: #5d5d5d; color: #eee; font: inherit; padding: 0; height: 23px; border-radius: 1px; text-align: center; flex: none; }

.settings { width: 487px; border-right: 1px solid #2b2b2b; }
.settings .titlebar { padding-left: 4px; }
.settings .title { width: 70px; }
.settings .titlebar .grip:nth-child(3) { margin-right: 4px; }
.toolhead { display: flex; height: 23px; padding-left: 1px; }
.name { width: 271px; padding-top: 4px; font-size: 11.500px; letter-spacing: -.35px; }
.reset-tool { width: 113px; margin-right: 5px; }
.tool-help { width: 96px; }
.toolhead .btn { letter-spacing: -.1px; }
.toolhead + .frame { margin-top: 8px; }
.frame { margin: 0 5px 2px; height: 20px; border-radius: 2px; background: #5d5d5d; font: bold 11px/20px "Open Sans", sans-serif; letter-spacing: -.25px; color: #bdbdbd; display: flex; align-items: center; }
.frame::before { content: ""; border: 6px solid transparent; border-left-color: #eee; border-right-width: 0; margin: -2px 17px 0 10px; }
.frame.open::before { border: 6px solid transparent; border-top-color: #eee; border-bottom-width: 0; margin: -2px 14px 0 7px; }
.body { margin: 3px 7px 0; background: #494949; }
.move { height: 244px; padding-top: 3px; margin-bottom: 2px; }
.soft { height: 332px; margin-bottom: 3px; }
.row { display: flex; align-items: center; letter-spacing: .3px; }
.move .row { letter-spacing: -.13px; }
.row label { width: 130px; margin-right: 7px; text-align: right; color: #b8b8b8; flex: none; }
.h13 { height: 13px; } .h14 { height: 14px; } .h15 { height: 15px; } .h18 { height: 18px; } .h19 { height: 19px; } .h20 { height: 20px; } .h23 { height: 23px; } .h90 { height: 90px; }
.mt1 { margin-top: 1px; } .mt2 { margin-top: 2px; } .mt3 { margin-top: 3px; } .mt4 { margin-top: 4px; } .mt5 { margin-top: 5px; } .mt8 { margin-top: 8px; }
.arr { border: 4px solid transparent; border-top-color: #999; border-bottom-width: 0; margin: 0 10px 0 5px; }
.fld { height: 18px; line-height: 18px; background: #2b2b2b; border-radius: 2px; padding-left: 5px; color: #ccc; margin-right: 4px; flex: none; }
.fld.num { letter-spacing: -.35px; }
.row > .fld:nth-child(2) { margin-left: 1px; }
.fld.dim { background: #404040; height: 23px; line-height: 23px; }
.fld.off { height: 18px; line-height: 18px; color: #6a6a6a; }
.w188 { width: 188px; } .w60 { width: 60px; } .w129 { width: 129px; } .w75 { width: 75px; } .w50 { width: 50px; } .w81 { width: 81px; } .w83 { width: 83px; }
.sep { border: 0; height: 2px; background: #434343; margin: 0 2px; }
.sep.mt5 { margin-top: 5px; } .sep.mt3 { margin-top: 3px; }
.edit { width: 100px; margin-right: 2px; color: #fff; } .rst { width: 50px; }
.row .btn { letter-spacing: .1px; }
.cb { width: 13px; height: 13px; background: #2b2b2b; margin-left: 1px; border-radius: 1px; flex: none; display: block; }
.cb.on::before { content: ""; display: block; width: 4px; height: 9px; border: solid #e4e4e4; border-width: 0 2px 2px 0; transform: translate(4.500px, 1px) rotate(40deg) skewY(5deg); }
.cbl { margin-left: 5px; color: #bbb; }
.softreset { width: 48px; margin-left: 129px; }
.combo { height: 19px; background: #5d5d5d; border-radius: 2px; margin-left: 3px; display: flex; align-items: center; padding-left: 3px; color: #eee; }
.combo b { font-weight: normal; flex: 1; height: 19px; line-height: 19px; border-right: 1px solid #444; margin-right: 4px; }
.combo .arr { border-width: 5px 5px 0; border-top-color: #bbb; margin: 0; }
.combo::after { content: ""; width: 5px; }
.well { background: #444; }
.slider { margin-left: -1px; }
.swatch { width: 60px; height: 13px; background: #ff0; margin-left: 1px; margin-right: 4px; }

.views { width: 1153px; display: flex; }
.col { width: 578px; border-right: 1px solid #2b2b2b; }
.col.right { width: 575px; }
.vp { padding-left: 7px; }
.right .vp { padding-left: 4px; }
.vp.top { height: 386px; border-bottom: 1px solid #2b2b2b; }
.vp.bottom { height: 387px; margin-top: 1px; padding-top: 2px; }
.vmenu { height: 20px; display: flex; align-items: center; padding: 2px 0 0 8px; color: #c8c8c8; }
.vmenu span:nth-child(1) { width: 40px; } .vmenu span:nth-child(2) { width: 58px; } .vmenu span:nth-child(3) { width: 57.500px; } .vmenu span:nth-child(4) { width: 44px; } .vmenu span:nth-child(5) { width: 62px; }
.bottom .vmenu { height: 19px; }
.vp.bottom.active { margin: 3px 0 0 2px; border: 1px solid #8a8a8a; height: 384px; width: 572px; padding: 0 0 0 1px; }
.active .vmenu { height: 18px; }
.axis text { font: bold 10px "DejaVu Sans Mono", monospace; }
.cam { font: bold 10.500px "Open Sans", sans-serif; fill: #fff; text-anchor: middle; }

.channel { width: 233px; padding-left: 8px; }
.channel .titlebar { padding-left: 2px; }
.channel .title { width: 139px; }
.channel .titlebar .grip:nth-child(3) { margin-right: 6px; }
.chicons { height: 19px; padding-left: 166px; }
.chmenu { height: 22px; display: flex; align-items: center; padding-left: 7px; color: #ccc; font-size: 11.600px; letter-spacing: .1px; }
.chmenu span:nth-child(1) { width: 63px; } .chmenu span:nth-child(2) { width: 35px; } .chmenu span:nth-child(3) { width: 48.500px; }
.chbody { display: flex; height: 487px; }
.chlist { width: 213px; overflow: hidden; padding-left: 1px; }
.obj, .sec, .node { display: block; height: 16px; line-height: 17px; padding-left: 1px; font-size: 11.300px; }
.node { padding-left: 10px; }
.node.sel { background: linear-gradient(#373737 15px, #444 0); }
.attr { display: flex; height: 16px; }
.attr span { width: 147px; text-align: right; padding-right: 2px; line-height: 17px; letter-spacing: -.35px; }
.attr em { width: 64px; height: 15px; line-height: 16px; background: #2b2b2b; font-style: normal; padding-left: 5px; color: #d0d0d0; }
.scroll { width: 12px; background: #373737; }
.tabs { height: 31px; padding-top: 9px; border-top: 1px solid #2b2b2b; margin-top: 2px; display: flex; }
.tab { height: 21px; line-height: 24px; background: #373737; text-align: center; margin-right: 1px; color: #999; border-radius: 2px 2px 0 0; }
.w61 { width: 61px; }
.tab.cur { width: 48px; background: #6a6a6a; color: #eee; line-height: 22px; }
.layers { border: 1px solid #2b2b2b; border-right: 0; height: 190px; }
.lmenu { height: 22px; display: flex; align-items: center; padding-left: 10px; color: #ccc; }
.lmenu span:nth-child(1) { width: 46px; } .lmenu span:nth-child(2) { width: 57px; } .lmenu span:nth-child(3) { width: 44px; }
.keys text { font: bold 13px "Open Sans", sans-serif; fill: #d9683c; }
.llist { width: 214px; height: 115px; margin: 1px 0 0 4px; background: #2b2b2b; }
.weight { display: flex; padding: 3px 0 0 4px; color: #777; letter-spacing: .1px; }
.wl { width: 41px; padding-top: 7px; }
.wf { width: 38px; background: #404040; height: 18px; line-height: 18px; padding-left: 5px; border-radius: 2px; color: #6e6e6e; }
.key { width: 20px; height: 22px; margin-top: -3px; line-height: 22px; text-align: center; padding-right: 4px; background: #484848; color: #777; }

.timeline { height: 36px; display: flex; flex: none; }
.ticks text { font: 11.300px "Open Sans", sans-serif; letter-spacing: -.3px; fill: #7e7e7e; }
.now { font: 11.300px "Open Sans", sans-serif; fill: #fff; }
.inp { background: #2b2b2b; border-radius: 2px; height: 23px; line-height: 23px; padding-left: 4px; color: #ccc; flex: none; letter-spacing: -.2px; }
.cur-frame { width: 68px; height: 18px; line-height: 19px; margin: 9px 7px 0 4px; }
.play { margin-top: 5px; }
.range { height: 33px; display: flex; flex: none; padding: 4px 0 0 7px; align-items: flex-start; }
.r1 { width: 68px; margin: 0 8px 0 6px; } .r2 { width: 68px; margin-right: 7px; }
.track { width: 1280px; height: 23px; background: #373737; padding: 2px 0 0 7px; }
.bar { width: 770px; height: 19px; border-radius: 3px; background: #5d5d5d; display: flex; align-items: center; padding: 0 4px; color: #ccc; letter-spacing: -.2px; }
.bar i { width: 13px; height: 13px; background: #8f8f8f; border-radius: 2px; margin-right: 3px; }
.bar i:last-child { margin: 0 0 0 4px; }
.bar .end { margin-left: auto; }
.r3 { width: 68px; margin: 0 8px 0 7px; } .r4 { width: 68px; }
.sel2 { border: 1px solid #515151; border-radius: 3px; height: 23px; line-height: 22px; padding-left: 5px; color: #ccc; width: 102px; letter-spacing: -.15px; }
.cmd { height: 33px; display: flex; flex: none; padding: 4px 0 0 7px; border-bottom: 1px solid #2b2b2b; }
.mel { width: 51px; padding: 6px 0 0 16px; color: #eee; letter-spacing: -.3px; }
.cmdin { width: 482px; }
.div { width: 1px; height: 24px; background: #2b2b2b; margin: 0 6px 0 1px; }
.result { width: 1335px; height: 25px; margin: -1px 6px 0 0; line-height: 25px; background: #2b2b2b; padding-left: 6px; color: #ccc; letter-spacing: -.16px; }
.brace { font: bold 9px "Liberation Mono", monospace; fill: #333; }
.help { padding: 3px 7px; }
```
